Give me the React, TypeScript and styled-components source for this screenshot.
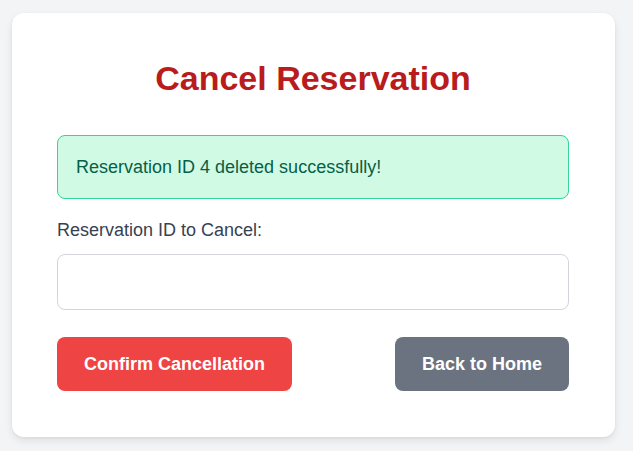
import styled, { createGlobalStyle } from "styled-components";

const GlobalStyle = createGlobalStyle`
  body {
    margin: 0;
    background-color: #f3f4f6;
    font-family: "Liberation Sans", Arial, sans-serif;
  }
`;

const Page = styled.div`
  padding: 13px 18px 15px 12px;
`;

const Card = styled.div`
  width: 603px;
  box-sizing: border-box;
  background-color: #ffffff;
  border-radius: 12px;
  box-shadow: 0 4px 8px rgba(0, 0, 0, 0.08), 0 1px 3px rgba(0, 0, 0, 0.06);
  padding: 46px 46px 46px 45px;
  display: flex;
  flex-direction: column;
`;

const Title = styled.h1`
  margin: 0 0 37px;
  text-align: center;
  font-weight: 700;
  font-size: 34px;
  line-height: 39px;
  color: #b91c1c;
`;

const Alert = styled.div`
  height: 64px;
  box-sizing: border-box;
  display: flex;
  align-items: center;
  padding: 0 18px;
  border: 1px solid #34d399;
  border-radius: 8px;
  background-color: #d1fae5;
  color: #065f46;
  font-size: 18px;
  margin-bottom: 18px;
`;

const Label = styled.label`
  display: block;
  font-size: 18px;
  line-height: 27px;
  color: #374151;
  margin-bottom: 10px;
`;

const Input = styled.input`
  height: 56px;
  box-sizing: border-box;
  width: 100%;
  border: 1px solid #d1d5db;
  border-radius: 8px;
  padding: 0 14px;
  font-size: 18px;
  font-family: inherit;
  outline: none;
  margin-bottom: 27px;
`;

const Actions = styled.div`
  display: flex;
  justify-content: space-between;
`;

const Button = styled.button<{ $variant: "danger" | "neutral" }>`
  height: 54px;
  width: ${(p) => (p.$variant === "danger" ? "235px" : "174px")};
  padding: 0;
  border: none;
  border-radius: 8px;
  font-family: "Liberation Sans", Arial, sans-serif;
  font-weight: 700;
  font-size: 18px;
  color: #ffffff;
  cursor: pointer;
  background-color: ${(p) => (p.$variant === "danger" ? "#ef4444" : "#6b7280")};
`;

export default function App() {
  return (
    <>
      <GlobalStyle />
      <Page>
        <Card>
          <Title>Cancel Reservation</Title>
          <Alert>Reservation ID 4 deleted successfully!</Alert>
          <Label htmlFor="rid">Reservation ID to Cancel:</Label>
          <Input id="rid" type="text" />
          <Actions>
            <Button $variant="danger">Confirm Cancellation</Button>
            <Button $variant="neutral">Back to Home</Button>
          </Actions>
        </Card>
      </Page>
    </>
  );
}
